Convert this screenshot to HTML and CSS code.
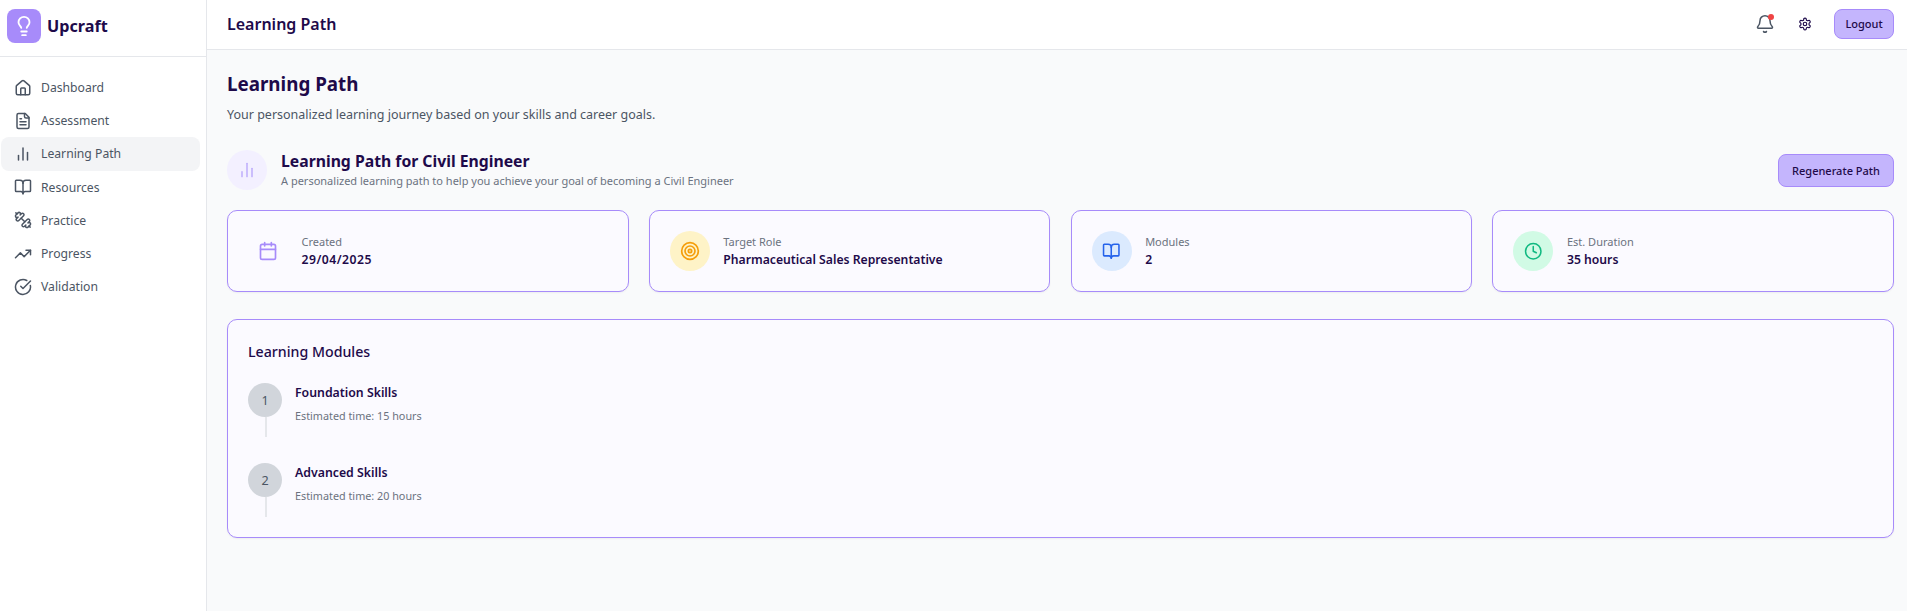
FILE: index.html
```html
<!DOCTYPE html>
<html lang="en">
<head>
<meta charset="utf-8">
<title>Upcraft - Learning Path</title>
<link rel="stylesheet" href="styles.css">
</head>
<body>
<div class="app">
  <aside class="sidebar">
    <div class="brand">
      <span class="brand-icon">
        <svg width="22" height="22" viewBox="0 0 24 24" fill="none" stroke="#fff" stroke-width="2" stroke-linecap="round" stroke-linejoin="round"><path d="M15 14c.2-1 .7-1.7 1.500-2.500 1-.9 1.500-2.200 1.500-3.500A6 6 0 0 0 6 8c0 1 .2 2.200 1.500 3.500.7.7 1.300 1.500 1.500 2.500"/><path d="M9 18h6"/><path d="M10 22h4"/></svg>
      </span>
      <span class="brand-name">Upcraft</span>
    </div>
    <nav class="nav">
      <a class="nav-item"><svg class="nav-icon" viewBox="0 0 24 24"><path d="M15 21v-8a1 1 0 0 0-1-1h-4a1 1 0 0 0-1 1v8"/><path d="M3 10a2 2 0 0 1 .709-1.528l7-5.999a2 2 0 0 1 2.582 0l7 5.999A2 2 0 0 1 21 10v9a2 2 0 0 1-2 2H5a2 2 0 0 1-2-2z"/></svg>Dashboard</a>
      <a class="nav-item"><svg class="nav-icon" viewBox="0 0 24 24"><path d="M15 2H6a2 2 0 0 0-2 2v16a2 2 0 0 0 2 2h12a2 2 0 0 0 2-2V7Z"/><path d="M14 2v4a2 2 0 0 0 2 2h4"/><path d="M10 9H8"/><path d="M16 13H8"/><path d="M16 17H8"/></svg>Assessment</a>
      <a class="nav-item nav-item-active"><svg class="nav-icon" viewBox="0 0 24 24"><path d="M18 20V10"/><path d="M12 20V4"/><path d="M6 20v-6"/></svg>Learning Path</a>
      <a class="nav-item"><svg class="nav-icon" viewBox="0 0 24 24"><path d="M12 7v14"/><path d="M3 18a1 1 0 0 1-1-1V4a1 1 0 0 1 1-1h5a4 4 0 0 1 4 4 4 4 0 0 1 4-4h5a1 1 0 0 1 1 1v13a1 1 0 0 1-1 1h-6a3 3 0 0 0-3 3 3 3 0 0 0-3-3z"/></svg>Resources</a>
      <a class="nav-item"><svg class="nav-icon" viewBox="0 0 24 24"><path d="M14.400 14.400 9.600 9.600"/><path d="M18.657 21.485a2 2 0 1 1-2.829-2.828l-1.767 1.768a2 2 0 1 1-2.829-2.829l6.364-6.364a2 2 0 1 1 2.829 2.829l-1.768 1.767a2 2 0 1 1 2.828 2.829z"/><path d="m21.500 21.500-1.400-1.400"/><path d="M3.900 3.900 2.500 2.500"/><path d="M6.404 12.768a2 2 0 1 1-2.829-2.829l1.768-1.767a2 2 0 1 1-2.828-2.829l2.828-2.828a2 2 0 1 1 2.829 2.828l1.767-1.768a2 2 0 1 1 2.829 2.829z"/></svg>Practice</a>
      <a class="nav-item"><svg class="nav-icon" viewBox="0 0 24 24"><path d="M16 7h6v6"/><path d="m22 7-8.500 8.500-5-5L2 17"/></svg>Progress</a>
      <a class="nav-item"><svg class="nav-icon" viewBox="0 0 24 24"><path d="M21.801 10A10 10 0 1 1 17 3.335"/><path d="m9 11 3 3L22 4"/></svg>Validation</a>
    </nav>
  </aside>
  <div class="main">
    <header class="topbar">
      <h1 class="topbar-title">Learning Path</h1>
      <div class="topbar-actions">
        <span class="bell">
          <svg class="bell-icon" viewBox="0 0 24 24"><path d="M10.268 21a2 2 0 0 0 3.464 0"/><path d="M3.262 15.326A1 1 0 0 0 4 17h16a1 1 0 0 0 .74-1.673C19.410 13.956 18 12.499 18 8A6 6 0 0 0 6 8c0 4.499-1.411 5.956-2.738 7.326"/></svg>
          <span class="bell-dot"></span>
        </span>
        <svg class="gear-icon" viewBox="0 0 24 24"><path d="M12.220 2h-.44a2 2 0 0 0-2 2v.18a2 2 0 0 1-1 1.730l-.43.250a2 2 0 0 1-2 0l-.15-.080a2 2 0 0 0-2.730.730l-.22.380a2 2 0 0 0 .730 2.730l.150.100a2 2 0 0 1 1 1.720v.510a2 2 0 0 1-1 1.740l-.150.090a2 2 0 0 0-.730 2.730l.220.380a2 2 0 0 0 2.730.730l.150-.080a2 2 0 0 1 2 0l.430.250a2 2 0 0 1 1 1.730V20a2 2 0 0 0 2 2h.440a2 2 0 0 0 2-2v-.180a2 2 0 0 1 1-1.730l.430-.250a2 2 0 0 1 2 0l.150.080a2 2 0 0 0 2.730-.730l.220-.390a2 2 0 0 0-.730-2.730l-.150-.080a2 2 0 0 1-1-1.740v-.500a2 2 0 0 1 1-1.740l.150-.090a2 2 0 0 0 .730-2.730l-.220-.380a2 2 0 0 0-2.730-.730l-.150.080a2 2 0 0 1-2 0l-.430-.250a2 2 0 0 1-1-1.730V4a2 2 0 0 0-2-2z"/><circle cx="12" cy="12" r="3"/></svg>
        <button class="btn btn-logout">Logout</button>
      </div>
    </header>
    <main class="content">
      <h2 class="page-title">Learning Path</h2>
      <p class="page-sub">Your personalized learning journey based on your skills and career goals.</p>
      <section class="path-head">
        <div class="path-left">
          <span class="path-icon"><svg class="svg-20 violet-soft" viewBox="0 0 24 24"><path d="M18 20V10"/><path d="M12 20V4"/><path d="M6 20v-6"/></svg></span>
          <div>
            <h3 class="path-title">Learning Path for Civil Engineer</h3>
            <p class="path-sub">A personalized learning path to help you achieve your goal of becoming a Civil Engineer</p>
          </div>
        </div>
        <button class="btn btn-regen">Regenerate Path</button>
      </section>
      <section class="stats">
        <div class="card stat">
          <span class="stat-icon"><svg class="svg-20 violet" viewBox="0 0 24 24"><path d="M8 2v4"/><path d="M16 2v4"/><rect x="3" y="4" width="18" height="18" rx="2"/><path d="M3 10h18"/></svg></span>
          <div><div class="stat-label">Created</div><div class="stat-value stat-date">29/04/2025</div></div>
        </div>
        <div class="card stat">
          <span class="stat-icon bg-amber"><svg class="svg-20 amber" viewBox="0 0 24 24"><circle cx="12" cy="12" r="10"/><circle cx="12" cy="12" r="6"/><circle cx="12" cy="12" r="2"/></svg></span>
          <div><div class="stat-label">Target Role</div><div class="stat-value">Pharmaceutical Sales Representative</div></div>
        </div>
        <div class="card stat">
          <span class="stat-icon bg-blue"><svg class="svg-18 blue" viewBox="0 0 24 24"><path d="M12 7v14"/><path d="M3 18a1 1 0 0 1-1-1V4a1 1 0 0 1 1-1h5a4 4 0 0 1 4 4 4 4 0 0 1 4-4h5a1 1 0 0 1 1 1v13a1 1 0 0 1-1 1h-6a3 3 0 0 0-3 3 3 3 0 0 0-3-3z"/></svg></span>
          <div><div class="stat-label">Modules</div><div class="stat-value">2</div></div>
        </div>
        <div class="card stat">
          <span class="stat-icon bg-green"><svg class="svg-18 green" viewBox="0 0 24 24"><circle cx="12" cy="12" r="10"/><path d="M12 6v6l4 2"/></svg></span>
          <div><div class="stat-label">Est. Duration</div><div class="stat-value">35 hours</div></div>
        </div>
      </section>
      <section class="card modules">
        <h3 class="modules-title">Learning Modules</h3>
        <div class="module">
          <div class="module-rail"><span class="module-num">1</span><span class="module-line"></span></div>
          <div class="module-text"><h4 class="module-name">Foundation Skills</h4><p class="module-time">Estimated time: 15 hours</p></div>
        </div>
        <div class="module">
          <div class="module-rail"><span class="module-num">2</span><span class="module-line"></span></div>
          <div class="module-text"><h4 class="module-name">Advanced Skills</h4><p class="module-time">Estimated time: 20 hours</p></div>
        </div>
      </section>
    </main>
  </div>
</div>
</body>
</html>
```
FILE: styles.css
```css
* { box-sizing: border-box; }
html, body { margin: 0; height: 100%; }
body { font-family: "Noto Sans", sans-serif; color: #1e0a4a; background: #f9fafb; overflow: hidden; }
h1, h2, h3, h4, p { margin: 0; }
.app { display: flex; height: 611px; }
.sidebar { width: 207px; flex: none; background: #fff; border-right: 1px solid #e5e7eb; }
.brand { height: 57px; padding: 9px 7px 0; display: flex; align-items: flex-start; gap: 6px; border-bottom: 1px solid #e5e7eb; }
.brand-icon { width: 34px; height: 34px; border-radius: 8px; background: #a78bfa; display: flex; align-items: center; justify-content: center; }
.brand-name { font-size: 16.2px; font-weight: 700; color: #1e0a4a; line-height: 35px; }
.nav { padding: 14px 6px 0 1px; display: flex; flex-direction: column; }
.nav-item { height: 33.2px; display: flex; align-items: center; gap: 9px; padding-left: 13px; border-radius: 8px; font-size: 12.2px; color: #4b5563; }
.nav-item-active { background: #f3f4f6; }
.nav-icon { width: 18px; height: 18px; fill: none; stroke: #4b5563; stroke-width: 2; stroke-linecap: round; stroke-linejoin: round; flex: none; }
.main { flex: 1; min-width: 0; display: flex; flex-direction: column; }
.topbar { height: 50px; flex: none; background: #fff; border-bottom: 1px solid #e5e7eb; padding: 0 13px 2px 20px; display: flex; align-items: center; justify-content: space-between; }
.topbar-title { font-size: 16px; font-weight: 600; }
.topbar-actions { display: flex; align-items: center; }
.bell { position: relative; width: 20px; height: 20px; display: block; margin-right: 23px; }
.bell-icon { width: 20px; height: 20px; fill: none; stroke: #4b5563; stroke-width: 1.8; stroke-linecap: round; stroke-linejoin: round; display: block; }
.bell-dot { position: absolute; top: 0; right: 1px; width: 6px; height: 6px; border-radius: 50%; background: #ef4444; }
.gear-icon { width: 14px; height: 14px; fill: none; stroke: #1e0a4a; stroke-width: 2; stroke-linecap: round; stroke-linejoin: round; margin-right: 22px; }
.btn { font-family: inherit; font-weight: 500; font-size: 11px; color: #1e0a4a; background: #c4b5fd; border: 1px solid #a78bfa; border-radius: 8px; }
.btn-logout { width: 60px; height: 30px; padding: 0; }
.content { padding: 21px 13px 0 20px; }
.page-title { font-size: 18.8px; font-weight: 700; line-height: 26px; }
.page-sub { font-size: 12.5px; color: #4b5563; line-height: 18px; margin-top: 9px; }
.path-head { display: flex; align-items: center; justify-content: space-between; margin-top: 26px; height: 40px; }
.path-left { display: flex; align-items: center; gap: 14px; }
.path-icon { width: 40px; height: 40px; border-radius: 50%; background: #f3f0ff; display: flex; align-items: center; justify-content: center; }
.svg-20, .svg-18 { fill: none; stroke-width: 2; stroke-linecap: round; stroke-linejoin: round; }
.svg-20 { width: 20px; height: 20px; }
.svg-18 { width: 18.5px; height: 18.5px; }
.violet { stroke: #a78bfa; }
.violet-soft { stroke: #b7a5fb; stroke-width: 1.6; }
.amber { stroke: #f59e0b; }
.blue { stroke: #2563eb; }
.green { stroke: #10b981; }
.path-title { font-size: 15.75px; font-weight: 700; line-height: 20px; }
.path-sub { font-size: 11px; color: #6b7280; line-height: 16px; margin-top: 2px; }
.btn-regen { width: 116px; height: 33px; padding: 0; }
.stats { display: grid; grid-template-columns: repeat(4, 1fr); gap: 20.25px; margin-top: 20px; }
.card { background: #fbfaff; border: 1px solid #a78bfa; border-radius: 10px; box-shadow: 0 1px 2px rgba(0,0,0,.05); }
.stat { height: 82px; display: flex; align-items: center; gap: 13.5px; padding: 0 20px; }
.stat-icon { width: 40px; height: 40px; border-radius: 50%; display: flex; align-items: center; justify-content: center; flex: none; }
.bg-amber { background: #fef3c7; }
.bg-blue { background: #dbeafe; }
.bg-green { background: #d1fae5; }
.stat-label { font-size: 11px; color: #6b7280; line-height: 16px; }
.stat-value { font-size: 12.2px; font-weight: 600; line-height: 18px; margin-top: 1px; }
.stat-date { letter-spacing: .5px; }
.modules { margin-top: 27px; height: 219px; padding: 22px 20px 0; }
.modules-title { font-size: 14.2px; font-weight: 500; line-height: 20px; margin-bottom: 21px; }
.module { display: flex; gap: 13px; height: 80px; }
.module-rail { width: 34px; display: flex; flex-direction: column; align-items: center; flex: none; }
.module-num { width: 34px; height: 34px; border-radius: 50%; background: #d1d5db; color: #4b5563; font-size: 12.6px; display: flex; align-items: center; justify-content: center; }
.module-line { width: 2px; height: 20px; background: #e5e7eb; margin-left: 2px; }
.module-text { padding-top: 1px; }
.module-name { font-size: 12.3px; font-weight: 600; line-height: 18px; }
.module-time { font-size: 10.8px; color: #6b7280; line-height: 16px; margin-top: 6px; }
```
